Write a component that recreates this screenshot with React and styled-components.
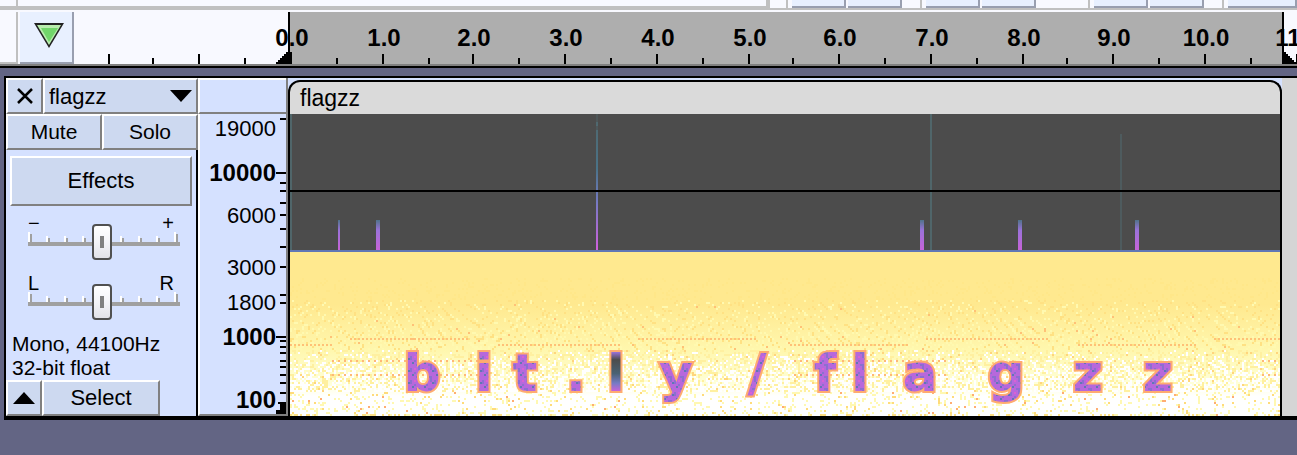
import React, { useMemo } from "react";
import styled, { createGlobalStyle, css } from "styled-components";

const Global = createGlobalStyle`
  * { box-sizing: border-box; }
  html, body { margin: 0; min-height: 100vh; background: #636584; }
  body, button, select { font-family: "Liberation Sans", Arial, sans-serif; font-size: 22px; color: #000; }
`;

const Page = styled.main`
  display: flex;
  flex-direction: column;
  overflow: hidden;
  min-height: 100vh;
`;

/* ---- docked toolbars above the timeline ---- */
const ToolDock = styled.div`
  display: flex;
  justify-content: flex-end;
  height: 10px;
  background: #f8f9ff;
  border-bottom: 2px solid #c0c0c0;
`;
const DockSpace = styled.div`
  flex: 1;
  border-bottom: 2px solid #c0c0c0;
  border-right: 4px solid #c0c0c0;
  display: flex;
`;
const DockGrip = styled.div`
  width: 18px;
  border-right: 2px solid #c0c0c0;
`;
const ToolGroup = styled.div`
  display: flex;
  gap: 2px;
  padding-left: 4px;
  margin-left: ${(p) => p.$before}px;
  border-left: 2px solid #c0c0c0;
`;
const ToolStub = styled.div`
  width: ${(p) => p.$w || 54}px;
  background: #e8f0ff;
  border-right: 2px solid #999fb0;
  border-bottom: 2px solid #999fb0;
`;

/* ---- timeline ---- */
const TimelineBar = styled.div`
  display: flex;
  height: 58px;
  padding-top: 2px;
  background: #f8f9ff;
  border-bottom: 2px solid #000;
  box-shadow: inset 0 -2px #808080;
`;
const Grip = styled.div`
  width: 18px;
  height: 52px;
  border-right: 2px solid #c0c0c0;
  border-bottom: 2px solid #c0c0c0;
`;
const PinButton = styled.button`
  width: 54px;
  height: 52px;
  margin-left: 2px;
  padding: 0 0 4px 6px;
  background: #e8f0ff;
  border: 0;
  border-right: 2px solid #999fb0;
  border-bottom: 2px solid #999fb0;
  display: grid;
  place-items: center;
`;
const TimeRuler = styled.svg`
  flex: 1;
  min-width: 0;
  height: 52px;
  font: bold 24px "Liberation Sans", Arial, sans-serif;
`;

/* ---- track ---- */
const Track = styled.section`
  display: flex;
  margin: 8px 0 0 4px;
  height: 344px;
  border: solid #000;
  border-width: 2px 0 4px 2px;
  background: #d5e1ff;
`;
const ControlPanel = styled.div`
  width: 192px;
  display: flex;
  flex-direction: column;
  border-right: 2px solid #000;
`;
const Row = styled.div`
  display: flex;
  flex: none;
  ${(p) => p.$full && css`margin-right: -2px;`}
`;
const raised = css`
  background: #cdd9f0;
  border: 2px solid;
  border-color: #fff #808080 #808080 #fff;
`;
const PanelButton = styled.button`
  ${raised}
  height: 36px;
  padding: 0;
  font-size: ${(p) => p.$size || 21}px;
  flex: ${(p) => (p.$w ? `0 0 ${p.$w}px` : "1")};
  display: grid;
  place-items: center;
`;
const EffectsButton = styled(PanelButton)`
  flex: none;
  height: 50px;
  margin: 6px 4px 0;
`;
const NameMenu = styled.label`
  ${raised}
  flex: 1;
  height: 36px;
  display: grid;
  grid-template-columns: 1fr;
  align-items: center;
`;
const NameSelect = styled.select`
  grid-area: 1 / 1;
  appearance: none;
  background: none;
  border: 0;
  padding: 0 28px 0 4px;
  width: 100%;
`;
const NameArrow = styled.svg`
  grid-area: 1 / 1;
  justify-self: end;
  margin-right: 4px;
  pointer-events: none;
`;
const SliderBlock = styled.label`
  display: block;
  flex: none;
  height: 60px;
  padding: 6px 16px 0 22px;
`;
const SliderEnds = styled.span`
  display: flex;
  justify-content: space-between;
  height: 12px;
  line-height: 22px;
  padding-right: 6px;
  font-size: 20px;
`;
const SliderBody = styled.span`
  display: grid;
  height: 36px;
`;
const SliderTicks = styled.svg`
  grid-area: 1 / 1;
  width: 152px;
  height: 36px;
`;
const Range = styled.input`
  grid-area: 1 / 1;
  appearance: none;
  background: none;
  width: 148px;
  height: 36px;
  margin: 0;
  &::-webkit-slider-thumb {
    appearance: none;
    width: 20px;
    height: 36px;
    border: 2px solid #505050;
    border-radius: 4px;
    background:
      linear-gradient(#808080, #808080) center / 4px 12px no-repeat,
      linear-gradient(#fff, #f4f4f8 50%, #e2e2e8);
  }
`;
const TrackInfo = styled.p`
  margin: 6px 0 0;
  padding-left: 6px;
  font-size: 21px;
  line-height: 24px;
  white-space: nowrap;
`;
const FrequencyRuler = styled.div`
  width: 90px;
  display: flex;
  flex-direction: column;
  border-right: 2px solid #808080;
`;
const RulerCap = styled.div`
  height: 36px;
  border: solid;
  border-width: 2px 0 2px 2px;
  border-color: #fff #808080 #808080 #fff;
`;
const FrequencyScale = styled.svg`
  width: 88px;
  height: 302px;
  border-left: 2px solid #fff;
  border-bottom: 2px solid #808080;
  font-family: "Liberation Sans", Arial, sans-serif;
`;
const ClipArea = styled.div`
  flex: 1;
  min-width: 0;
  display: flex;
`;
const Clip = styled.article`
  flex: 1;
  min-width: 0;
  margin-top: 2px;
  border: solid #000;
  border-width: 2px 2px 0;
  border-radius: 12px 12px 0 0;
  overflow: hidden;
  background: #dadada;
`;
const ClipName = styled.h2`
  margin: 0;
  height: 32px;
  padding-left: 10px;
  font-size: 23px;
  font-weight: normal;
  line-height: 32px;
`;
const Spectrogram = styled.svg`
  display: block;
  width: 100%;
  height: 302px;
  background: #4c4c4c;
`;
const EnergyText = styled.text`
  font: bold 52px "DejaVu Sans", sans-serif;
  font-variant-ligatures: none;
  text-anchor: middle;
  fill: url(#ink);
  stroke: #ffab70;
  stroke-width: 4px;
  paint-order: stroke;
`;
const TrackTail = styled.div`
  width: 15px;
  background: #d5d5d5;
`;

const MAJOR = [-2, -1, 0, 1, 2, 3, 4, 5, 6, 7, 8, 9, 10, 11];
const timeX = (s) => 217 + Math.round(s * 45.7) * 2;

function Timeline() {
  return (
    <TimeRuler>
      <rect x="216" width="994" height="52" fill="#aeaeae" />
      {MAJOR.map((s) => (
        <g key={s}>
          <rect x={timeX(s) - 1} y="42" width="2" height="10" />
          <rect x={timeX(s + 0.5) - 1} y="46" width="2" height="6" />
          {s >= 0 && (
            <text x={timeX(s) + 1} y="34" textAnchor="middle">{s.toFixed(1)}</text>
          )}
        </g>
      ))}
      <rect x="214" width="2" height="52" />
      <rect x="1208" width="2" height="52" />
      <path d="M202 52v-2h2v-2h2v-2h2v-2h2v-2h2v-2h6v12zM1208 40h4v2h2v2h2v2h2v2h2v2h2v2h-14z" />
    </TimeRuler>
  );
}

const SCALE = [
  ["19000", 14, 0], ["10000", 59, 1], ["6000", 101, 0], ["3000", 153, 0],
  ["1800", 188, 0], ["1000", 223, 1], ["100", 286, 1],
];
const MINOR_F = [4, 68, 76, 88, 100, 114, 132, 152, 180, 188, 226, 232, 238, 246, 252, 260, 268, 278];

function Frequencies() {
  return (
    <FrequencyScale>
      {SCALE.map(([label, y, bold]) => (
        <text key={label} x="76" y={y + 8} textAnchor="end" fontSize={bold ? 24 : 22} fontWeight={bold ? 700 : 400}>
          {label}
        </text>
      ))}
      {MINOR_F.map((y) => <rect key={y} x="80" y={y} width="6" height="2" />)}
      <path d="M76 58h10v2h-10zM76 222h10v2h-10zM78 288h8v12h-10v-4h4v-6h-2z" />
    </FrequencyScale>
  );
}

function Slider({ name, low, high }) {
  const ticks = [0, 18, 36, 54, 74, 92, 110, 128, 146];
  return (
    <SliderBlock>
      <SliderEnds><span>{low}</span><span>{high}</span></SliderEnds>
      <SliderBody>
        <SliderTicks>
          {ticks.map((x, i) => {
            const end = i === 0 || i === 8;
            return (
              <g key={x}>
                <rect x={x} y={end ? 8 : 12} width="2" height={end ? 10 : 6} fill="#fff" />
                <rect x={x + 2} y={end ? 10 : 14} width="2" height={end ? 8 : 4} fill="#a0a0a0" />
              </g>
            );
          })}
          <rect y="18" width="152" height="4" fill="#a0a0a0" />
        </SliderTicks>
        <Range type="range" min="-100" max="100" defaultValue="0" aria-label={name} />
      </SliderBody>
    </SliderBlock>
  );
}

/* Cells of low-frequency energy, gathered into one path for each colour. */
function makeCells() {
  let seed = 90217;
  const rnd = () => {
    seed = (seed * 1664525 + 1013904223) >>> 0;
    return seed / 4294967296;
  };
  const out = {};
  const put = (c, x, y) => {
    out[c] = (out[c] || "") + `M${x * 2} ${y * 2}h2v2h-2z`;
  };
  for (let y = 0; y < 82; y++) {
    for (let x = 0; x < 496; x++) {
      const r = rnd();
      const u = (x % 94) - 47;
      const wave = Math.cos(u * u * 0.026 + y * 1.35) * Math.cos(x * 2.75 + y * 0.5);
      if (y < 24) {
        if (y > 12 && r < 0.12) put("#ffe789", x, y);
      } else if (y < 49) {
        const d = (y - 24) / 25;
        if (wave > 0.5 && r < 0.4 + d * 0.2) put(r < 0.06 * d ? "#ffc177" : "#ffe183", x, y);
        else if (wave < -0.25 && r < 0.15 + d * 0.55) put("#fff9b0", x, y);
        if ((y === 43 || y === 46) && x % 2 === 0 && Math.sin(x / 23 + y) > 0.25) put("#ffc177", x, y);
      } else if (y < 70) {
        const d = (y - 49) / 21;
        if (r < 0.06 + d * 0.55) put("#ffffff", x, y);
        else if (r > 0.975) put("#ffd57d", x, y);
        else if (r > 0.76) put("#fff0a0", x, y);
        if ((y === 54 || y === 61) && x % 3 === 0 && Math.sin(x / 37) > 0.5) put("#ffb878", x, y);
      } else if (r > 0.995) put("#ffad72", x, y);
      else if (r > 0.965) put("#ffdb7b", x, y);
      else if (r > 0.84) put("#fff8b2", x, y);
      else if (y === 81 && r > 0.65) put("#ffe183", x, y);
    }
  }
  return Object.entries(out);
}

const BURSTS = [
  [48, 106, 2], [86, 106, 4], [306, 0, 2], [630, 106, 4], [640, 0, 2], [728, 106, 4], [830, 20, 2], [845, 106, 4],
];
const BURST_TEXT_X = "132 194 235 286 326 386 467 535 570 630 716 798 868";

function ClipSpectrogram() {
  const cells = useMemo(makeCells, []);
  return (
    <Spectrogram role="img" aria-label="Spectrogram of flagzz">
      <defs>
        <linearGradient id="burst" x1="0" y1="0" x2="0" y2="1">
          <stop offset="0" stopColor="#50738b" />
          <stop offset=".35" stopColor="#9b72da" />
          <stop offset="1" stopColor="#c763d8" />
        </linearGradient>
        <linearGradient id="tall" x1="0" y1="0" x2="0" y2="1">
          <stop offset="0" stopColor="#50666a" />
          <stop offset=".4" stopColor="#4a7388" />
          <stop offset=".65" stopColor="#767bc4" />
          <stop offset="1" stopColor="#d060dd" />
        </linearGradient>
        <linearGradient id="quiet" x1="0" y1="238" x2="0" y2="277" gradientUnits="userSpaceOnUse">
          <stop offset="0" stopColor="#9b72da" />
          <stop offset=".2" stopColor="#4c4c4c" />
          <stop offset=".55" stopColor="#4a6274" />
          <stop offset=".8" stopColor="#767bc4" />
          <stop offset="1" stopColor="#c763d8" />
        </linearGradient>
        <linearGradient id="low" x1="0" y1="0" x2="0" y2="1">
          <stop offset="0" stopColor="#ffe98f" />
          <stop offset=".32" stopColor="#ffe98f" />
          <stop offset=".6" stopColor="#fff7ae" />
          <stop offset=".8" stopColor="#ffffd8" />
          <stop offset=".88" stopColor="#ffffff" />
        </linearGradient>
        <pattern id="energy" width="992" height="164" y="138" patternUnits="userSpaceOnUse">
          {cells.map(([c, d]) => <path key={c} d={d} fill={c} shapeRendering="crispEdges" />)}
        </pattern>
        <pattern id="ink" width="12" height="12" patternUnits="userSpaceOnUse">
          <rect width="12" height="12" fill="#b768dc" />
          <path d="M0 2h2v4h-2zM4 6h2v2h-2zM8 0h2v4h-2zM6 10h4v2h-4z" fill="#8c6fd0" />
          <path d="M2 8h2v2h-2zM10 4h2v2h-2z" fill="#6077b5" />
          <path d="M4 2h2v2h-2z" fill="#d962d4" />
        </pattern>
      </defs>
      <rect width="2" height="136" fill="#50666a" />
      {BURSTS.map(([x, y, w]) => (
        <rect key={x} x={x} y={y} width={w} height={136 - y}
          fill={x === 306 ? "url(#tall)" : y === 106 ? "url(#burst)" : "#50666a"}
          opacity={y === 20 ? 0.6 : 1} />
      ))}
      <path d="M306 0h2v8h-2zM306 12h2v4h-2z" fill="#4c4c4c" opacity=".6" />
      <rect y="76" width="100%" height="2" />
      <rect y="136" width="100%" height="2" fill="#6177b5" />
      <rect y="138" width="100%" height="164" fill="url(#low)" />
      <rect y="138" width="100%" height="164" fill="url(#energy)" />
      <EnergyText x={BURST_TEXT_X} y="277">
        bit.<tspan fill="url(#quiet)" style={{ fill: "url(#quiet)" }}>l</tspan>y/flagzz
      </EnergyText>
    </Spectrogram>
  );
}

export default function App() {
  return (
    <>
      <Global />
      <Page>
        <ToolDock>
          <DockSpace><DockGrip /></DockSpace>
          <ToolGroup $before={16}><ToolStub /><ToolStub /></ToolGroup>
          <ToolGroup $before={18}><ToolStub /><ToolStub /></ToolGroup>
          <ToolGroup $before={52}><ToolStub /><ToolStub /></ToolGroup>
          <ToolGroup $before={18}><ToolStub $w={69} /></ToolGroup>
        </ToolDock>
        <TimelineBar>
          <Grip />
          <PinButton aria-label="Timeline options">
            <svg width="32" height="28">
              <path d="M1 2h30l-15 25z" fill="#222" />
              <path d="M4 4h24l-12 20z" fill="#b9edae" />
              <path d="M8 7h17l-9 14z" fill="#72d66b" />
            </svg>
          </PinButton>
          <Timeline />
        </TimelineBar>
        <Track>
          <ControlPanel>
            <Row $full>
              <PanelButton $w={37} aria-label="Close track">
                <svg width="18" height="16"><path d="M2 1l14 14M16 1L2 15" stroke="#000" strokeWidth="2.5" /></svg>
              </PanelButton>
              <NameMenu>
                <NameSelect aria-label="Track name"><option>flagzz</option></NameSelect>
                <NameArrow width="22" height="12"><path d="M0 0h22l-11 12z" /></NameArrow>
              </NameMenu>
            </Row>
            <Row $full>
              <PanelButton>Mute</PanelButton>
              <PanelButton>Solo</PanelButton>
            </Row>
            <EffectsButton $size={22}>Effects</EffectsButton>
            <Slider name="Gain" low="−" high="+" />
            <Slider name="Pan" low="L" high="R" />
            <TrackInfo>Mono, 44100Hz<br />32-bit float</TrackInfo>
            <Row>
              <PanelButton $w={36} aria-label="Collapse track">
                <svg width="22" height="12"><path d="M0 12h22L11 0z" /></svg>
              </PanelButton>
              <PanelButton $w={118} $size={22}>Select</PanelButton>
            </Row>
          </ControlPanel>
          <FrequencyRuler>
            <RulerCap />
            <Frequencies />
          </FrequencyRuler>
          <ClipArea>
            <Clip>
              <ClipName>flagzz</ClipName>
              <ClipSpectrogram />
            </Clip>
            <TrackTail />
          </ClipArea>
        </Track>
      </Page>
    </>
  );
}
